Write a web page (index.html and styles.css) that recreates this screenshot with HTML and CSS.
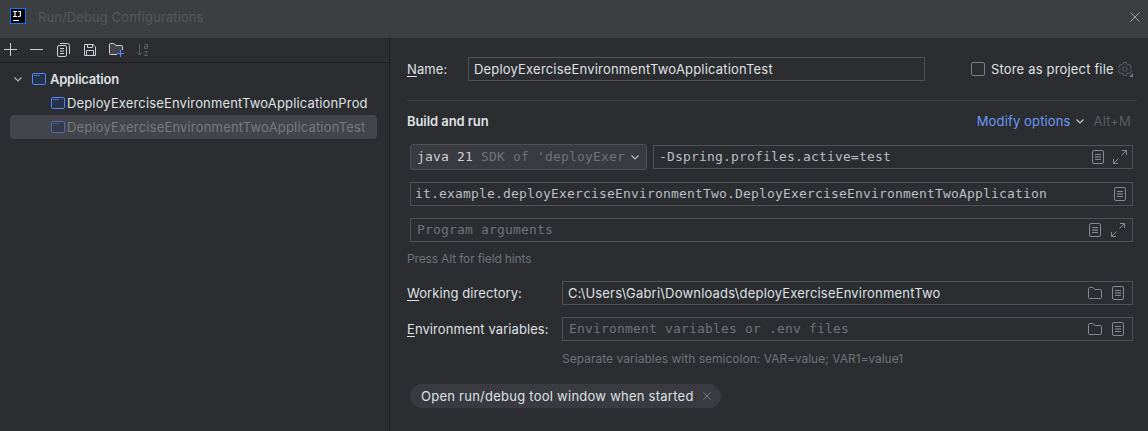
FILE: index.html
```html
<!DOCTYPE html>
<html lang="en">
<head>
<meta charset="utf-8">
<title>Run/Debug Configurations</title>
<link rel="stylesheet" href="styles.css">
</head>
<body>
<svg class="defs" width="0" height="0">
  <symbol id="app" viewBox="0 0 14 12"><rect x=".5" y=".5" width="13" height="11" rx="1.3" fill="#25324d" stroke="#548af7"/><path d="M2 2.5h1.4M4.2 2.5h1.4M6.4 2.5h1.4" stroke="#548af7"/></symbol>
  <symbol id="list" viewBox="0 0 12 14"><rect x=".5" y=".5" width="11" height="13" rx="1.5" fill="none" stroke="currentColor"/><path d="M3 4.5h6M3 9.5h6" stroke="currentColor"/><path d="M3 7h6" stroke="currentColor" stroke-width="2" opacity=".6"/></symbol>
  <symbol id="expand" viewBox="0 0 14 14"><path d="M9 .5h4.5V5M13.5.5 8.5 5.5M.5 9v4.5H5M.5 13.5l5-5" fill="none" stroke="currentColor"/></symbol>
  <symbol id="folder" viewBox="0 0 14 12"><path d="M.5 1.8Q.5.5 1.8.5h3L7 2.5h5.2q1.3 0 1.3 1.3v6.4q0 1.3-1.3 1.3H1.8Q.5 11.5.5 10.2z" fill="none" stroke="currentColor"/></symbol>
  <symbol id="chevron" viewBox="0 0 8 5"><path d="M.5.5 4 4 7.5.5" fill="none" stroke="currentColor" stroke-width="1.1"/></symbol>
  <symbol id="close" viewBox="0 0 10 10"><path d="m.4.4 9.2 9.2M9.6.4.4 9.6" fill="none" stroke="currentColor"/></symbol>
</svg>
<header class="titlebar">
  <svg class="logo" width="16" height="16" viewBox="0 0 16 16"><rect width="16" height="16" fill="#087cfa"/><rect x="1" y="1" width="14" height="14" fill="#000"/><path d="M3 3.5h4M5 3v6M3 8.5h4M8 3.5h3M10.4 3v4.2q0 1.3-1.3 1.3H7.8" fill="none" stroke="#fff" stroke-width="1.2"/><path d="M3 12.5h6" stroke="#fff"/></svg>
  <span class="title">Run/Debug Configurations</span>
  <svg class="close" width="10" height="10"><use href="#close"/></svg>
</header>
<main class="body">
  <aside class="side">
    <div class="toolbar">
      <svg width="13" height="13" viewBox="0 0 13 13"><path d="M6.5 0v13M0 6.5h13" stroke="currentColor"/></svg>
      <svg width="13" height="13" viewBox="0 0 13 13"><path d="M0 6.5h13" stroke="currentColor"/></svg>
      <svg class="copy" width="13" height="14" viewBox="0 0 13 14"><path d="M3 .5h7.4q2.1 0 2.1 2.1V11" fill="none" stroke="currentColor"/><rect x=".5" y="2.5" width="9" height="11" rx="1.5" fill="none" stroke="currentColor"/><path d="M3 5.5h4M3 8h4M3 10.5h4" stroke="currentColor"/></svg>
      <svg width="12" height="12" viewBox="0 0 12 12"><path d="M.5.5h8.7l2.3 2.3v8.7H.5zM3.5.5v3h5v-3M2.5 11.5v-5h7v5" fill="none" stroke="currentColor"/></svg>
      <svg width="15" height="14" viewBox="0 0 15 14"><path d="M8 11.5H1.5q-1 0-1-1v-9q0-1 1-1h3.3L7 2.5h5.5q1 0 1 1V7" fill="#43454a" stroke="currentColor"/><path d="M11.5 7v7M8 10.5h7" stroke="#548af7" stroke-width="1.2"/></svg>
      <svg class="dim" width="13" height="14" viewBox="0 0 13 14"><path d="M3.5 1v11M.5 9l3 3 3-3M8.5 1.5h3v4h-3v-2h3M8.5 8.5h3l-3 4h3.5" fill="none" stroke="currentColor"/></svg>
    </div>
    <div class="tree">
      <div class="node root"><svg class="arrow" width="8" height="5"><use href="#chevron"/></svg><svg width="14" height="12"><use href="#app"/></svg><span class="rootname">Application</span></div>
      <div class="node leaf"><svg width="14" height="12"><use href="#app"/></svg><span class="leafname">DeployExerciseEnvironmentTwoApplicationProd</span></div>
      <div class="node leaf selected"><svg width="14" height="12"><use href="#app"/></svg><span class="leafname">DeployExerciseEnvironmentTwoApplicationTest</span></div>
    </div>
  </aside>
  <section class="form">
    <div class="namerow">
      <label class="label"><u>N</u>ame:</label>
      <div class="field namefield"><span class="nametext">DeployExerciseEnvironmentTwoApplicationTest</span></div>
      <span class="checkbox"></span><span class="store">Store as project file</span>
      <svg class="gear" width="15" height="15" viewBox="0 0 15 15"><path d="M5.5.5h3l.5 2 1 .6 2-.6 1.5 2.6L12 6.6v.8l1.5 1.5L12 11.5l-2-.6-1 .6-.5 2h-3l-.5-2-1-.6-2 .6L.5 8.9 2 7.4v-.8L.5 5.1 2 2.5l2 .6 1-.6z" fill="none" stroke="currentColor" stroke-linejoin="round"/><circle cx="7" cy="7" r="2.3" fill="none" stroke="currentColor"/><path d="M15 11v4h-4z" fill="#6f737a"/></svg>
    </div>
    <div class="heading">
      <b class="section">Build and run</b>
      <span class="modify">Modify options</span><svg class="modarrow" width="8" height="5"><use href="#chevron"/></svg><span class="shortcut">Alt+M</span>
    </div>
    <div class="jvm">
      <div class="combo mono"><span class="java">java 21</span><span class="sdk">SDK of 'deployExer</span><svg width="8" height="5"><use href="#chevron"/></svg></div>
      <div class="field vm mono"><span>-Dspring.profiles.active=test</span><svg class="first" width="12" height="14"><use href="#list"/></svg><svg width="14" height="14"><use href="#expand"/></svg></div>
    </div>
    <div class="field mainclass mono"><span>it.example.deployExerciseEnvironmentTwo.DeployExerciseEnvironmentTwoApplication</span><svg class="first" width="12" height="14"><use href="#list"/></svg></div>
    <div class="field args mono hintcolor"><span>Program arguments</span><svg class="first" width="12" height="14"><use href="#list"/></svg><svg width="14" height="14"><use href="#expand"/></svg></div>
    <div class="hint alt"><span>Press Alt for field hints</span></div>
    <div class="row">
      <label class="label"><u>W</u>orking directory:</label>
      <div class="field grow"><span class="path">C:\Users\Gabri\Downloads\deployExerciseEnvironmentTwo</span><svg class="first" width="14" height="12"><use href="#folder"/></svg><svg width="12" height="14"><use href="#list"/></svg></div>
    </div>
    <div class="row env">
      <label class="label"><u>E</u>nvironment variables:</label>
      <div class="field grow mono hintcolor"><span>Environment variables or .env files</span><svg class="first" width="14" height="12"><use href="#folder"/></svg><svg width="12" height="14"><use href="#list"/></svg></div>
    </div>
    <div class="hint sep"><span>Separate variables with semicolon: VAR=value; VAR1=value1</span></div>
    <div class="chip"><span>Open run/debug tool window when started</span><svg width="8" height="8"><use href="#close"/></svg></div>
  </section>
</main>
</body>
</html>
```
FILE: styles.css
```css
* { box-sizing: border-box; }
body { margin: 0; width: 1148px; height: 431px; overflow: hidden; background: #2b2d30; color: #dfe1e5; font: 13px/16px Inter, sans-serif; white-space: nowrap; }
svg { display: block; flex: none; }
.defs { position: absolute; }
u { text-decoration: underline; text-underline-offset: 2px; text-decoration-thickness: 1px; }
.titlebar { display: flex; align-items: center; height: 38px; padding: 0 8px 4px 10px; background: #3c3f41; color: #55585a; }
.logo { margin-top: -2px; }
.title { margin-left: 12px; letter-spacing: .1px; }
.close { margin-left: auto; color: #9da0a3; }
.body { display: flex; height: 393px; }
.side { width: 390px; border-right: 1px solid #1e1f22; }
.toolbar { display: flex; align-items: center; height: 25px; padding: 0 0 1px 4px; gap: 13px; border-bottom: 1px solid #1e1f22; color: #ced0d6; }
.copy { margin: 0 1px; }
.dim { color: #5a5d63; margin-left: -1px; }
.tree { padding: 4px 12px 0 10px; }
.node { display: flex; align-items: center; height: 24px; }
.root { padding-left: 4px; }
.arrow { color: #b4b8bf; margin-right: 10px; }
.rootname { margin-left: 4px; font-weight: 600; letter-spacing: -.24px; }
.leaf { padding-left: 41px; }
.leafname { margin-left: 2px; letter-spacing: .15px; }
.selected { background: #43454a; border-radius: 4px; color: #777a7d; }
.selected .leafname { letter-spacing: .18px; }
.selected svg { opacity: .55; }
.form { flex: 1; padding: 19px 15px 0 17px; }
.namerow { display: flex; align-items: center; height: 24px; }
.label { flex: none; letter-spacing: .08px; }
.namerow .label { width: 61px; }
.field { display: flex; align-items: center; height: 24px; padding: 0 6px 0 5px; border: 1px solid #4e5157; }
.field svg { color: #868a91; margin-left: 10px; }
.field .first { margin-left: auto; }
.namefield { width: 457px; }
.nametext, .path { letter-spacing: .19px; }
.checkbox { width: 14px; height: 14px; margin-left: 46px; border: 1px solid #7a7e85; border-radius: 2px; }
.store { margin-left: 6px; width: 123px; letter-spacing: .17px; }
.gear { color: #5a5d63; margin-left: 4px; }
.heading { display: flex; align-items: center; height: 44px; margin: 19px -4px 0 0; padding: 0 6px 3px 0; border-top: 1px solid #3c3e43; }
.section { font-weight: 600; letter-spacing: -.08px; }
.modify { margin-left: auto; color: #6b9bfa; letter-spacing: .14px; }
.modarrow { margin: 0 10px 0 5px; color: #ced0d6; }
.shortcut { color: #5a5d63; letter-spacing: .15px; }
.mono { font-family: "DejaVu Sans Mono", monospace; font-size: 13px; letter-spacing: .174px; color: #bcbec4; }
.jvm { display: flex; align-items: center; gap: 6px; margin-left: 3px; height: 26px; }
.combo { display: flex; align-items: center; width: 237px; height: 26px; padding: 0 7px 0 6px; border: 1px solid #4e5157; border-radius: 3px; background: #393b40; }
.java { color: #ced0d6; }
.sdk { margin-left: 8px; color: #6f737a; }
.combo svg { margin-left: auto; }
.vm { flex: 1; padding-right: 5px; }
.vm svg { margin-left: 9px; }
.mainclass { margin: 12px 0 0 3px; padding-left: 4px; }
.mainclass svg { margin-bottom: 1px; }
.args { margin: 12px 0 0 3px; padding-left: 6px; padding-right: 7px; }
.hintcolor { color: #6f737a; }
.hint { font-size: 12px; color: #6f737a; }
.alt { margin-top: 9px; letter-spacing: -.15px; }
.row { display: flex; align-items: center; margin-top: 14px; }
.row .label { width: 155px; }
.row .field { padding-right: 8px; }
.row .hintcolor { padding-left: 6px; }
.grow { flex: 1; }
.row.env { margin-top: 12px; }
.sep { margin: 10px 0 0 155px; letter-spacing: .02px; }
.chip { display: flex; align-items: center; width: 311px; height: 24px; margin: 17px 0 0 3px; padding: 0 10px 0 11px; border-radius: 12px; background: #393b40; letter-spacing: .25px; }
.chip svg { margin-left: auto; color: #868a91; }
```
